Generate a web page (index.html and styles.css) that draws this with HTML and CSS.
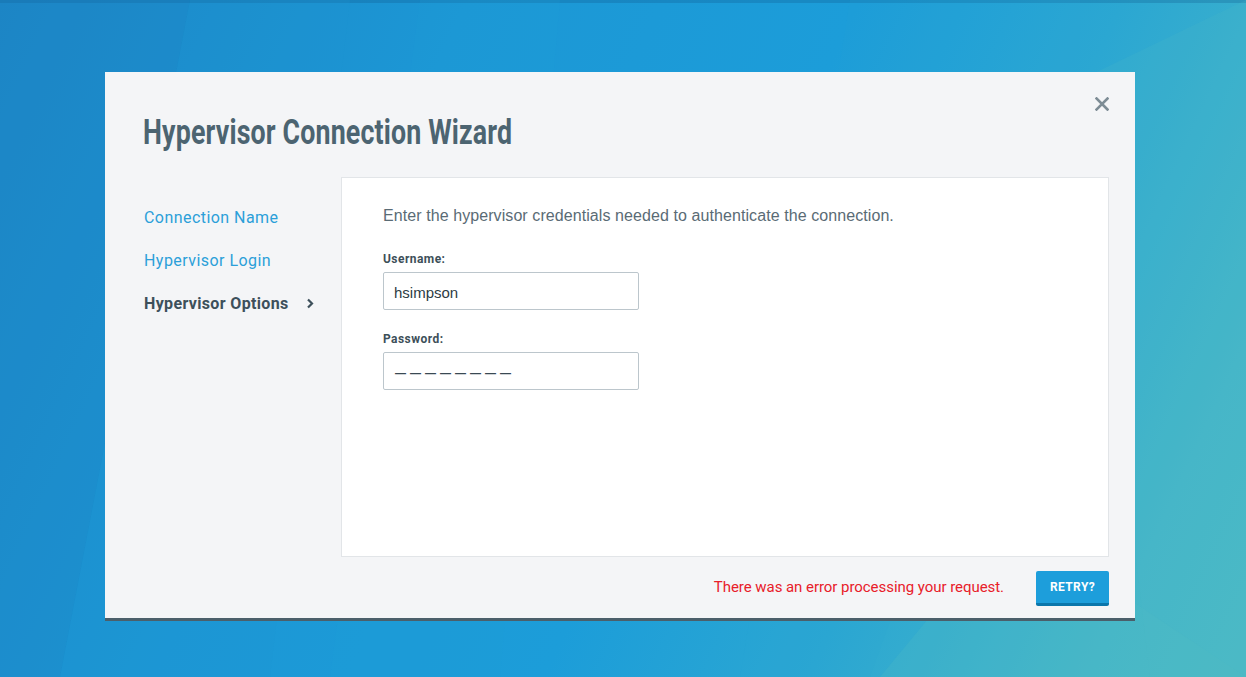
FILE: index.html
```html
<!DOCTYPE html>
<html lang="en">
<head>
<meta charset="utf-8">
<title>Hypervisor Connection Wizard</title>
<link rel="stylesheet" href="styles.css">
</head>
<body>
<svg class="backdrop" viewBox="0 0 1246 677" preserveAspectRatio="none" aria-hidden="true">
  <polygon points="0,0 190,0 60,677 0,677" fill="#1b82c2" opacity="0.25"/>
  <polygon points="190,0 350,0 270,677 60,677" fill="#1f95d2" opacity="0.2"/>
  <polygon points="420,0 560,0 500,677 330,677" fill="#22a0da" opacity="0.15"/>
  <polygon points="850,0 1080,0 1080,90 870,677 740,677" fill="#2aa5d6" opacity="0.12"/>
  <polygon points="1080,80 1246,0 1246,677 1150,677" fill="#4ab8c6" opacity="0.2"/>
  <polygon points="880,677 1010,520 1246,677" fill="#50bcc4" opacity="0.25"/>
</svg>
<div class="page">
  <div class="modal">
    <button class="close" aria-label="Close">
      <svg width="14" height="14" viewBox="0 0 14 14"><path d="M1.5 1.5 L12.5 12.5 M12.5 1.5 L1.5 12.5" stroke="#7d8c95" stroke-width="2.6" stroke-linecap="square"/></svg>
    </button>
    <h1 class="title"><span>Hypervisor Connection Wizard</span></h1>
    <div class="body">
      <nav class="steps">
        <a class="step">Connection Name</a>
        <a class="step">Hypervisor Login</a>
        <a class="step active">Hypervisor Options
          <svg class="chev" width="8" height="11" viewBox="0 0 8 11"><path d="M2 1.5 L6 5.5 L2 9.5" fill="none" stroke="#3d505b" stroke-width="2.2"/></svg>
        </a>
      </nav>
      <section class="panel">
        <p class="intro">Enter the hypervisor credentials needed to authenticate the connection.</p>
        <label class="label">Username:</label>
        <div class="input">hsimpson</div>
        <label class="label pw">Password:</label>
        <div class="input"><span class="mask">————————</span></div>
      </section>
    </div>
    <div class="footer">
      <span class="error">There was an error processing your request.</span>
      <button class="retry">RETRY?</button>
    </div>
  </div>
</div>
</body>
</html>
```

FILE: styles.css
```css
html, body {
  margin: 0;
  padding: 0;
  height: 677px;
  overflow: hidden;
}
body {
  background: linear-gradient(115deg, #1c86c6 0%, #1c97d5 30%, #1c9dd9 55%, #2ba7d2 72%, #45b6c8 90%, #4cbac5 100%);
  box-shadow: inset 0 3px 0 rgba(10, 80, 130, 0.25);
  font-family: Roboto, "Liberation Sans", sans-serif;
  position: relative;
}
.backdrop {
  position: absolute;
  left: 0;
  top: 0;
  width: 1246px;
  height: 677px;
}
.page {
  position: relative;
  padding: 72px 0 0 105px;
}
.modal {
  position: relative;
  width: 1030px;
  box-sizing: border-box;
  background: #f4f5f7;
  border-bottom: 3px solid #4b5f6a;
  padding: 41px 26px 12px 38px;
}
.close {
  position: absolute;
  right: 26px;
  top: 25px;
  width: 14px;
  height: 14px;
  padding: 0;
  border: 0;
  background: none;
  display: flex;
}
.title {
  margin: 0;
  height: 40px;
  line-height: 40px;
  font-size: 35px;
  font-weight: 700;
  color: #4c6471;
  white-space: nowrap;
}
.title span {
  display: inline-block;
  transform: scaleX(0.765);
  transform-origin: left center;
  letter-spacing: 0.2px;
}
.body {
  display: flex;
  margin-top: 24px;
  height: 380px;
}
.steps {
  width: 198px;
  flex: none;
  display: flex;
  flex-direction: column;
  padding: 19px 0 0 1px;
  box-sizing: border-box;
}
.step {
  display: flex;
  align-items: center;
  height: 43px;
  font-size: 16px;
  color: #2b9fd9;
  letter-spacing: 0.45px;
}
.step.active {
  color: #3d505b;
  font-weight: 700;
  letter-spacing: 0.35px;
}
.chev {
  margin-left: 17px;
}
.panel {
  flex: 1;
  background: #fff;
  border: 1px solid #e2e5e8;
  padding: 28px 41px;
}
.intro {
  margin: 0;
  font-family: "Liberation Sans", Arial, sans-serif;
  font-size: 16px;
  line-height: 20px;
  letter-spacing: 0.08px;
  color: #5a6b75;
}
.label {
  display: block;
  margin-top: 25px;
  height: 16px;
  line-height: 17px;
  font-size: 12px;
  font-weight: 700;
  letter-spacing: 0.45px;
  color: #3d4f59;
}
.label.pw {
  margin-top: 21px;
}
.input {
  margin-top: 5px;
  width: 256px;
  height: 38px;
  box-sizing: border-box;
  border: 1px solid #bcc6cc;
  border-radius: 2px;
  padding: 2px 10px 0;
  display: flex;
  align-items: center;
  font-family: "Liberation Sans", Arial, sans-serif;
  font-size: 15px;
  color: #2d3c44;
}
.mask {
  font-size: 11px;
  font-weight: 700;
  letter-spacing: 4px;
  color: #3a4a53;
  padding-top: 2px;
  padding-left: 1px;
}
.footer {
  display: flex;
  justify-content: flex-end;
  align-items: center;
  margin-top: 14px;
  height: 35px;
}
.error {
  font-size: 15px;
  color: #e8202a;
  margin-right: 32px;
  letter-spacing: -0.05px;
  padding-bottom: 3px;
}
.retry {
  width: 73px;
  height: 35px;
  box-sizing: border-box;
  border: 0;
  border-bottom: 3px solid #0b76ab;
  border-radius: 2px;
  background: #1d9edb;
  color: #fff;
  font-family: Roboto, "Liberation Sans", sans-serif;
  font-size: 12px;
  font-weight: 700;
  letter-spacing: 0.4px;
  padding: 0;
}
```
